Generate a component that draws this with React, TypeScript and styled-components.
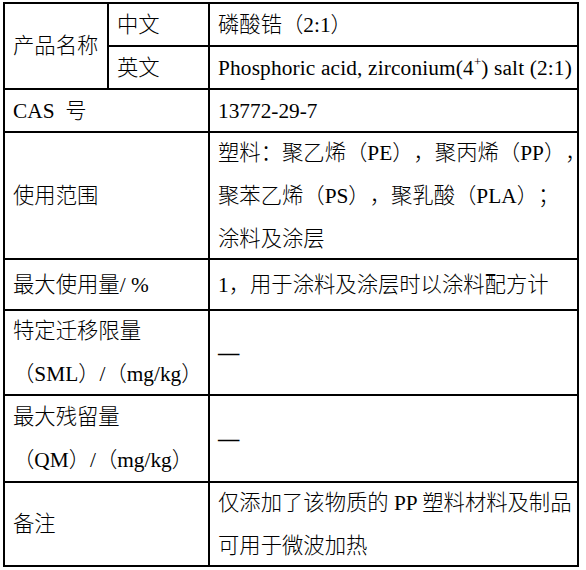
import React from "react";
import styled, { createGlobalStyle } from "styled-components";

const Global = createGlobalStyle`
  html, body {
    margin: 0;
    padding: 0;
    background: #ffffff;
  }
  body {
    font-family: "Liberation Serif", "Noto Sans CJK SC", serif;
    font-size: 21.33px;
    font-weight: 300;
    color: #000000;
    text-spacing-trim: space-all;
  }
`;

const Table = styled.div`
  display: grid;
  grid-template-columns: 102px 99px 367px;
  grid-template-rows: 41px 41px 41px 125px 49px 83px 85px 82px;
  gap: 2px;
  padding: 2px;
  background: #000000;
  width: fit-content;
  margin: 2px 0 0 3px;
`;

const Cell = styled.div<{ $cols?: number; $rows?: number }>`
  background: #ffffff;
  display: flex;
  flex-direction: column;
  justify-content: center;
  padding: 1px 8px 0;
  grid-column: span ${(p) => p.$cols ?? 1};
  grid-row: span ${(p) => p.$rows ?? 1};
  overflow: visible;
  min-width: 0;
`;

const Line = styled.span<{ $track?: number }>`
  display: block;
  white-space: pre;
  line-height: 43px;
  letter-spacing: ${(p) => p.$track ?? 0}px;
`;

const Sup = styled.sup`
  font-size: 0.6em;
  line-height: 0;
  vertical-align: 0.7em;
`;

const Dash = styled.span`
  display: block;
  line-height: 43px;
  font-family: "Liberation Serif", serif;
  font-weight: 700;
`;

export default function App() {
  return (
    <>
      <Global />
      <Table>
        <Cell $rows={2}>
          <Line>产品名称</Line>
        </Cell>
        <Cell>
          <Line>中文</Line>
        </Cell>
        <Cell>
          <Line>磷酸锆（2:1）</Line>
        </Cell>
        <Cell>
          <Line>英文</Line>
        </Cell>
        <Cell>
          <Line $track={0.15}>
            Phosphoric acid, zirconium(4<Sup>+</Sup>) salt (2:1)
          </Line>
        </Cell>

        <Cell $cols={2}>
          <Line>{"CAS  号"}</Line>
        </Cell>
        <Cell>
          <Line>13772-29-7</Line>
        </Cell>

        <Cell $cols={2}>
          <Line>使用范围</Line>
        </Cell>
        <Cell>
          <Line>塑料：聚乙烯（PE），聚丙烯（PP），</Line>
          <Line>聚苯乙烯（PS），聚乳酸（PLA）；</Line>
          <Line>涂料及涂层</Line>
        </Cell>

        <Cell $cols={2}>
          <Line>最大使用量/ %</Line>
        </Cell>
        <Cell>
          <Line>1，用于涂料及涂层时以涂料配方计</Line>
        </Cell>

        <Cell $cols={2}>
          <Line>特定迁移限量</Line>
          <Line>（SML）/（mg/kg）</Line>
        </Cell>
        <Cell>
          <Dash>—</Dash>
        </Cell>

        <Cell $cols={2}>
          <Line>最大残留量</Line>
          <Line>（QM）/（mg/kg）</Line>
        </Cell>
        <Cell>
          <Dash>—</Dash>
        </Cell>

        <Cell $cols={2}>
          <Line>备注</Line>
        </Cell>
        <Cell>
          <Line>仅添加了该物质的 PP 塑料材料及制品</Line>
          <Line>可用于微波加热</Line>
        </Cell>
      </Table>
    </>
  );
}
